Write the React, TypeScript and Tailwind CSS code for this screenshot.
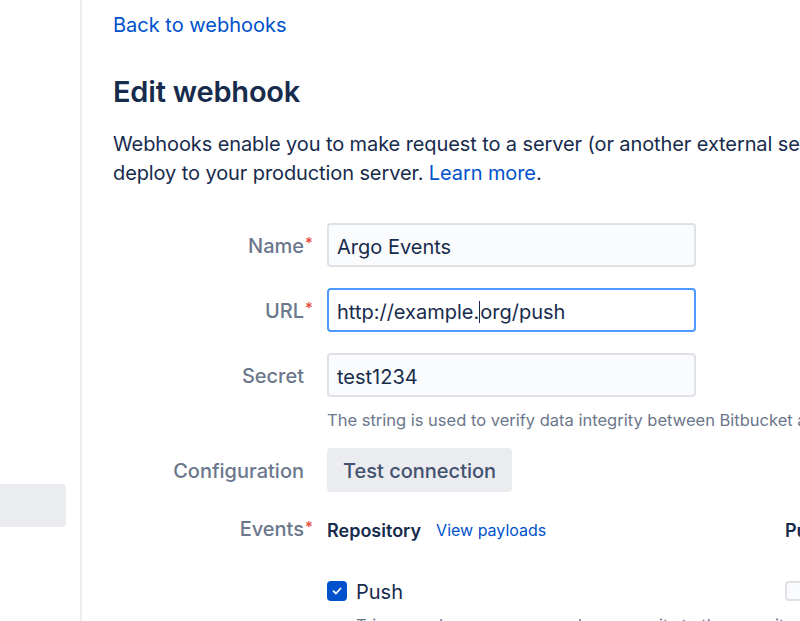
import React from "react";

function Label({ text, required }: { text: string; required?: boolean }) {
  return (
    <div className="w-[191px] shrink-0 text-right pt-[2px]">
      <span className="relative text-[20px] text-[#6b778c] font-medium">
        {text}
        {required && (
          <span className="absolute left-full top-[-2px] pl-[1px] text-[#e5493a] text-[15px]">*</span>
        )}
      </span>
    </div>
  );
}

export default function App() {
  return (
    <div className="flex h-[621px] w-[800px] overflow-hidden bg-white font-['Inter',sans-serif] text-[#172b4d]">
      <div className="w-[82px] shrink-0 border-r-2 border-[#ebecf0] pt-[484px]">
        <div className="h-[43px] w-[66px] rounded-r-[4px] bg-[#ebecf0]" />
      </div>
      <div className="flex-1 min-w-0 pl-[31px] pt-[13px]">
        <a className="block text-[20px] leading-[24px] text-[#0052cc]">Back to webhooks</a>
        <h1 className="mt-[37px] text-[29px] leading-[36px] font-semibold text-[#172b4d] tracking-[-0.2px]">Edit webhook</h1>
        <p className="mt-[20px] text-[20px] leading-[29px] whitespace-nowrap text-[#172b4d] tracking-[-0.1px]">
          <span className="block">Webhooks enable you to make request to a server (or another external service) when certain events happen, for example,</span>
          <span className="block">
            deploy to your production server. <a className="text-[#0052cc]">Learn more</a>.
          </span>
        </p>

        <div className="ml-[-31px] mt-[35px] flex flex-col">
          <div className="flex items-center gap-[23px] pl-[31px]">
            <Label text="Name" required />
            <div className="flex h-[44px] w-[369px] items-center rounded-[4px] border-2 border-[#dfe1e6] bg-[#fafbfc] px-[8px] pt-[3px] text-[20px]">
              Argo Events
            </div>
          </div>
          <div className="mt-[21px] flex items-center gap-[23px] pl-[31px]">
            <Label text="URL" required />
            <div className="flex h-[44px] w-[369px] items-center rounded-[4px] border-2 border-[#4c9aff] bg-white px-[8px] pt-[3px] text-[20px] whitespace-nowrap">
              http://example.<span className="inline-block h-[22px] w-[1px] bg-[#172b4d] align-middle" />org/push
            </div>
          </div>
          <div className="mt-[21px] flex items-center gap-[23px] pl-[31px]">
            <Label text="Secret" />
            <div className="flex h-[44px] w-[369px] items-center rounded-[4px] border-2 border-[#dfe1e6] bg-[#fafbfc] px-[8px] pt-[3px] text-[20px]">
              test1234
            </div>
          </div>
          <div className="mt-[12px] flex gap-[23px] pl-[31px]">
            <div className="w-[191px] shrink-0" />
            <div className="text-[16.5px] leading-[22px] text-[#6b778c] whitespace-nowrap">
              The string is used to verify data integrity between Bitbucket and your endpoint.
            </div>
          </div>
          <div className="mt-[17px] flex items-center gap-[23px] pl-[31px]">
            <Label text="Configuration" />
            <button className="h-[44px] rounded-[4px] bg-[#ebecf0] px-[16px] pt-[2px] text-[20px] text-[#42526e] font-medium">
              Test connection
            </button>
          </div>
          <div className="mt-[25px] flex gap-[23px] pl-[31px]">
            <div className="leading-[24px] mt-[-2px]">
              <Label text="Events" required />
            </div>
            <div className="flex whitespace-nowrap">
              <div className="w-[458px] shrink-0">
                <div className="flex items-center h-[24px] pt-[2px]">
                  <span className="text-[18px] font-semibold text-[#172b4d]">Repository</span>
                  <a className="ml-[15px] text-[16px] text-[#0052cc]">View payloads</a>
                </div>
                <div className="mt-[38px] flex items-center h-[24px]">
                  <span className="flex h-[20px] w-[20px] items-center justify-center rounded-[4px] bg-[#0052cc]">
                    <svg width="12" height="12" viewBox="0 0 12 12" fill="none">
                      <path d="M2.5 6.2 L5 8.5 L9.5 3.5" stroke="white" strokeWidth="1.8" strokeLinecap="round" strokeLinejoin="round" />
                    </svg>
                  </span>
                  <span className="ml-[9px] text-[20px] text-[#172b4d] pt-[2px]">Push</span>
                </div>
                <div className="mt-[11px] pl-[29px] text-[16.5px] leading-[22px] text-[#6b778c]">
                  Triggers when someone pushes commits to the repository
                </div>
              </div>
              <div className="w-[458px] shrink-0">
                <div className="flex items-center h-[24px] pt-[2px]">
                  <span className="text-[18px] font-semibold text-[#172b4d]">Pull request</span>
                </div>
                <div className="mt-[38px] flex items-center h-[24px]">
                  <span className="h-[20px] w-[20px] rounded-[4px] border-2 border-[#dfe1e6] bg-[#fafbfc]" />
                  <span className="ml-[9px] text-[20px] text-[#172b4d]">Created</span>
                </div>
              </div>
            </div>
          </div>
        </div>
      </div>
    </div>
  );
}
